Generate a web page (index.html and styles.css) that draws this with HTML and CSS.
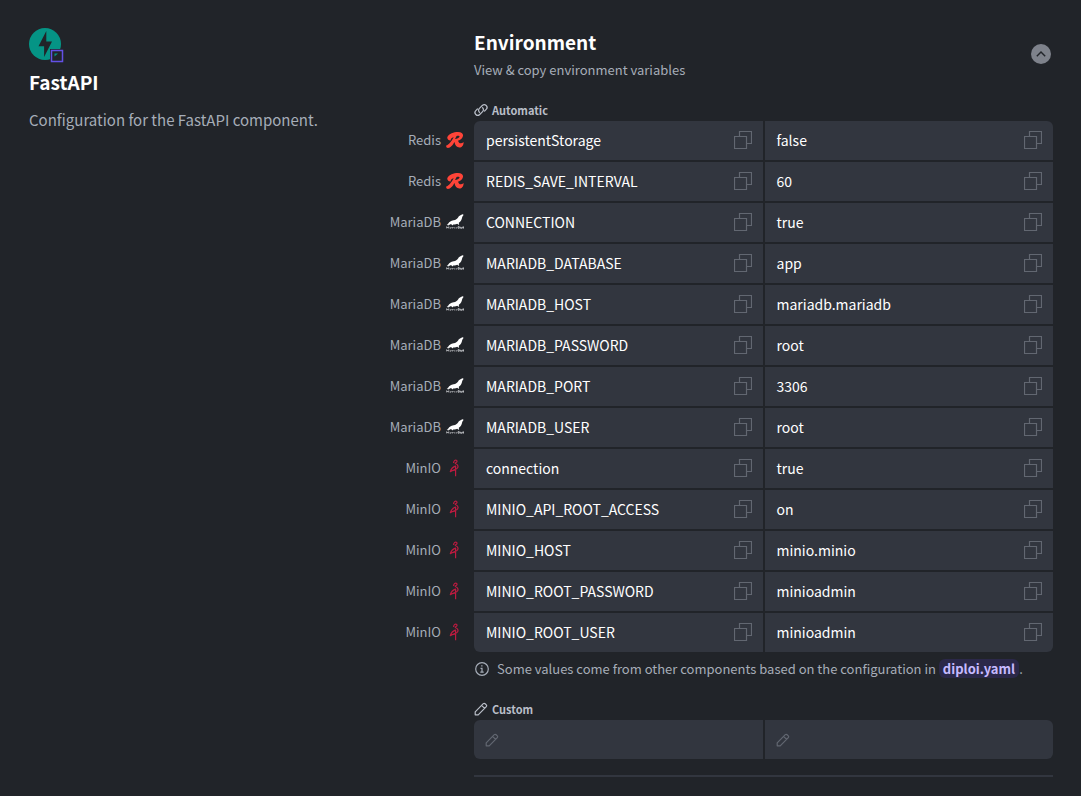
FILE: index.html
```html
<!DOCTYPE html>
<html lang="en">
<head>
<meta charset="utf-8">
<meta name="viewport" content="width=device-width, initial-scale=1">
<title>FastAPI – Environment</title>
<link rel="stylesheet" href="styles.css">
</head>
<body>
<svg class="sprite" aria-hidden="true">
  <symbol id="copy" viewBox="0 0 18 18"><path d="M5.5 5V.5h12v12H13M.5 5.5h12v12H.5z" fill="none" stroke="currentColor" stroke-width="1.200"/></symbol>
  <symbol id="pencil" viewBox="0 0 14 14"><path d="M1.2 12.8v-3L9.3 1.7a1.3 1.3 0 0 1 1.8 0l1.2 1.2a1.3 1.3 0 0 1 0 1.8l-8.1 8.1zM7.6 3.4l3 3" fill="none" stroke="currentColor" stroke-width="1.200" stroke-linejoin="round"/></symbol>
  <symbol id="redis" viewBox="0 0 18 18"><path d="M1.500 5.800C3 2.700 7.500 1 12 1c3.800 0 5.500 1.700 4.900 4.200-.5 2.100-2.300 3.700-4.900 4.500.6 1.600 1.500 2.600 2.900 2.600.9 0 1.800-.5 2.600-1.300.4 2.900-1.400 5.600-4.100 5.600-2.700 0-4.400-2.300-4.900-5.500-1.700 3-3.900 5.900-6.500 5.900-1.300 0-2.100-1.100-1.800-2.600 2.500-.4 5.200-4 7.500-8.200-2.400.5-3 1.900-3.100 3.300C2.500 9.600.6 7.800 1.500 5.800zM10.600 5 9 8c2-.3 4.100-1.100 4.500-2.200.3-1-1.200-1.100-2.900-.8z" fill="#ff4438"/></symbol>
  <symbol id="mariadb" viewBox="0 0 18 18"><path d="M17.300 1.500c-.7-.5-1.400.2-2.300.6-1.500.5-2.100 1.100-2.900 2.300-1.100 1.600-2.300 2.400-4.500 2.900C4.700 8 3.500 8.800 2.300 10.600L.7 11.900l1.700-.1-1 1.200 2.500-1.500c.6-.3 1.200-.2 1.700.1l1.200 1 .3-1.100c1.500.3 3.100 0 4.100-.7l1.900 1.300-.3-2.300c2-1.200 3-3.200 3.300-5.300.2-1 .7-1.600 1.300-2.200z" fill="#fff"/><path d="M.7 15.400v-1.700l1 1 1-1v1.700M3.700 15.100h1.400v-1M6.500 15.400v-.9h1M8.600 14.400v1M9.700 14.900h1.300M12 15.200v-1.500h1.300v1.500zM14.600 13.800v1.500h1.200v-1.300M16.800 13.800h.8v1.400h-.8z" fill="none" stroke="#d4d6d9" stroke-width=".8"/></symbol>
  <symbol id="minio" viewBox="0 0 18 18"><path d="M7.600 4C7.600 1.800 9.100.7 10.300 1.200c1.200.6.800 1.800-.3 2.300-1 .4-1 .9-.2 1.300 2.600 1 3 3.600.9 4.900L4.300 12.600c.8-2.600 2.800-4.700 5.500-5.700M9.600 7v10.200M5.200 11.900l4.400-1" fill="none" stroke="#bd1b40" stroke-width="1.200" stroke-linejoin="round"/></symbol>
</svg>

<main class="page">
  <section class="intro">
    <svg class="logo" viewBox="0 0 36 36" aria-hidden="true">
      <circle cx="16" cy="16" r="16" fill="#059485"/>
      <path d="M17.300 3 9.500 18.300h5.600V29L23 13.500h-5.700z" fill="#212429"/>
      <path d="M21 21h15v15H21z" fill="#212429"/>
      <path d="M22.500 22.500h11v11h-11z" fill="#212429" stroke="#6350e6" stroke-width="1.500"/>
      <path d="M25.500 25.500h3.500l-3.500 3z" fill="#059485"/>
    </svg>
    <h1 class="title">FastAPI</h1>
    <p class="lead">Configuration for the FastAPI component.</p>
  </section>

  <section class="environment">
    <header class="head">
      <div>
        <h2 class="title">Environment</h2>
        <p class="subtitle">View &amp; copy environment variables</p>
      </div>
      <button class="toggle" type="button" aria-label="Collapse environment" aria-expanded="true">
        <svg viewBox="0 0 20 20" aria-hidden="true"><path d="M5.800 12.200 10 8l4.200 4.200" fill="none" stroke="currentColor" stroke-width="1.400"/></svg>
      </button>
    </header>

    <h3 class="group">
      <svg class="group-icon" viewBox="0 0 14 14" aria-hidden="true"><path d="M5.400 9.300A2.700 2.700 0 0 1 5.400 5.400L8.300 2.500a2.750 2.750 0 0 1 3.900 3.900L10.600 8M8.600 4.700a2.700 2.700 0 0 1 0 3.900l-2.900 2.900a2.750 2.750 0 0 1-3.900-3.900L3.400 6" fill="none" stroke="currentColor" stroke-width="1.200" stroke-linecap="round"/></svg>
      Automatic
    </h3>
    <table class="vars">
      <colgroup><col class="source-col"><col><col></colgroup>
      <tbody id="rows"></tbody>
    </table>
    <p class="note">
      <svg class="note-icon" viewBox="0 0 14 14" aria-hidden="true"><circle cx="7" cy="7" r="6.300" fill="none" stroke="currentColor" stroke-width="1.200"/><path d="M5.500 6.300H7v3.900M5.300 10.200h3.400M6.200 3.900h1.300" fill="none" stroke="currentColor" stroke-width="1.200"/></svg>
      <span>Some values come from other components based on the configuration in <a class="file" href="#diploi">diploi.yaml</a>.</span>
    </p>

    <h3 class="group">
      <svg class="group-icon" aria-hidden="true"><use href="#pencil"/></svg>
      Custom
    </h3>
    <div class="custom">
      <label class="field"><svg class="field-icon" aria-hidden="true"><use href="#pencil"/></svg><input type="text" aria-label="Variable name"></label>
      <label class="field"><svg class="field-icon" aria-hidden="true"><use href="#pencil"/></svg><input type="text" aria-label="Variable value"></label>
    </div>
    <hr class="rule">
  </section>
</main>
<script src="app.js"></script>
</body>
</html>
```
FILE: styles.css
```css
* { box-sizing: border-box; }

body {
  margin: 0;
  background: #212429;
  color: #fff;
  font-family: "Noto Sans CJK SC", "Noto Sans", sans-serif;
  font-size: 14px;
  line-height: 20px;
}

h1, h2, h3, p { margin: 0; }

.sprite { position: absolute; width: 0; height: 0; }

.page {
  display: grid;
  grid-template-columns: minmax(0, 345fr) minmax(0, 579fr);
  column-gap: 100px;
  padding: 28px 28px 19px 29px;
}

.logo { display: block; width: 36px; height: 36px; }
.title { font-size: 19px; font-weight: 700; line-height: 28px; }
.intro .title { margin-top: 4px; }
.lead { margin-top: 14px; color: #a6adb8; font-size: 15px; }

.head {
  display: flex;
  align-items: center;
  justify-content: space-between;
  padding-right: 2px;
}
.subtitle { margin-top: 4px; color: #a6adb8; font-size: 13px; }

.toggle {
  display: flex;
  padding: 0;
  border: 0;
  border-radius: 50%;
  background: #7e828b;
  color: #212429;
  cursor: pointer;
}
.toggle svg { width: 20px; height: 20px; }

.group {
  display: flex;
  align-items: center;
  gap: 4px;
  margin-top: 20px;
  color: #b9bec8;
  font-size: 11px;
  font-weight: 700;
}
.group-icon { width: 14px; height: 14px; }

/* The source column hangs in the gap to the left of the section. */
.vars {
  width: calc(100% + 102px);
  margin: -1px -2px -2px -100px;
  border-spacing: 2px;
  table-layout: fixed;
}
.source-col { width: 96px; }
.vars th, .vars td { height: 39px; padding: 0 0 1px; }
.source {
  display: flex;
  align-items: center;
  justify-content: flex-end;
  gap: 5px;
  padding-right: 8px;
  color: #a6adb8;
  font-size: 13px;
  font-weight: 400;
}
.source svg { width: 18px; height: 18px; }
.vars td { background: #32363f; }
.vars tr:first-child td:nth-child(2) { border-top-left-radius: 6px; }
.vars tr:first-child td:last-child { border-top-right-radius: 6px; }
.vars tr:last-child td:nth-child(2) { border-bottom-left-radius: 6px; }
.vars tr:last-child td:last-child { border-bottom-right-radius: 6px; }

.cell {
  display: flex;
  align-items: center;
  justify-content: space-between;
  padding: 0 11px 0 12px;
}
.copy {
  display: flex;
  padding: 0;
  border: 0;
  background: none;
  color: #626771;
  cursor: pointer;
}
.copy svg { width: 18px; height: 18px; }

.note {
  display: flex;
  align-items: center;
  gap: 8px;
  margin-top: 7px;
  padding-left: 1px;
  color: #a6adb8;
  font-size: 13px;
}
.note-icon { flex: none; width: 14px; height: 14px; }
.file {
  padding: 0 4px;
  border-radius: 6px;
  background: #2b2849;
  color: #c6baff;
  font-weight: 700;
  text-decoration: none;
}

.custom {
  display: grid;
  grid-template-columns: 1fr 1fr;
  gap: 2px;
  margin-top: 1px;
}
.field {
  display: flex;
  align-items: center;
  gap: 6px;
  height: 39px;
  padding: 0 11px;
  background: #32363f;
}
.field:first-child { border-radius: 6px 0 0 6px; }
.field:last-child { border-radius: 0 6px 6px 0; }
.field-icon { flex: none; width: 14px; height: 14px; color: #626771; }
.field input {
  flex: 1;
  min-width: 0;
  padding: 0;
  border: 0;
  outline: 0;
  background: none;
  color: inherit;
  font: inherit;
}

.rule { height: 2px; margin: 16px 0 0; border: 0; background: #32363f; }
```
FILE: app.js
```js
const variables = [
  ["Redis", "persistentStorage", "false"],
  ["Redis", "REDIS_SAVE_INTERVAL", "60"],
  ["MariaDB", "CONNECTION", "true"],
  ["MariaDB", "MARIADB_DATABASE", "app"],
  ["MariaDB", "MARIADB_HOST", "mariadb.mariadb"],
  ["MariaDB", "MARIADB_PASSWORD", "root"],
  ["MariaDB", "MARIADB_PORT", "3306"],
  ["MariaDB", "MARIADB_USER", "root"],
  ["MinIO", "connection", "true"],
  ["MinIO", "MINIO_API_ROOT_ACCESS", "on"],
  ["MinIO", "MINIO_HOST", "minio.minio"],
  ["MinIO", "MINIO_ROOT_PASSWORD", "minioadmin"],
  ["MinIO", "MINIO_ROOT_USER", "minioadmin"],
];

const cell = (text) => `<td><div class="cell"><span>${text}</span>
  <button class="copy" type="button" aria-label="Copy ${text}"><svg aria-hidden="true"><use href="#copy"/></svg></button></div></td>`;

document.getElementById("rows").innerHTML = variables.map(([source, key, value]) => `<tr>
  <th scope="row"><div class="source"><span>${source}</span><svg aria-hidden="true"><use href="#${source.toLowerCase()}"/></svg></div></th>
  ${cell(key)}${cell(value)}</tr>`).join("");
```
